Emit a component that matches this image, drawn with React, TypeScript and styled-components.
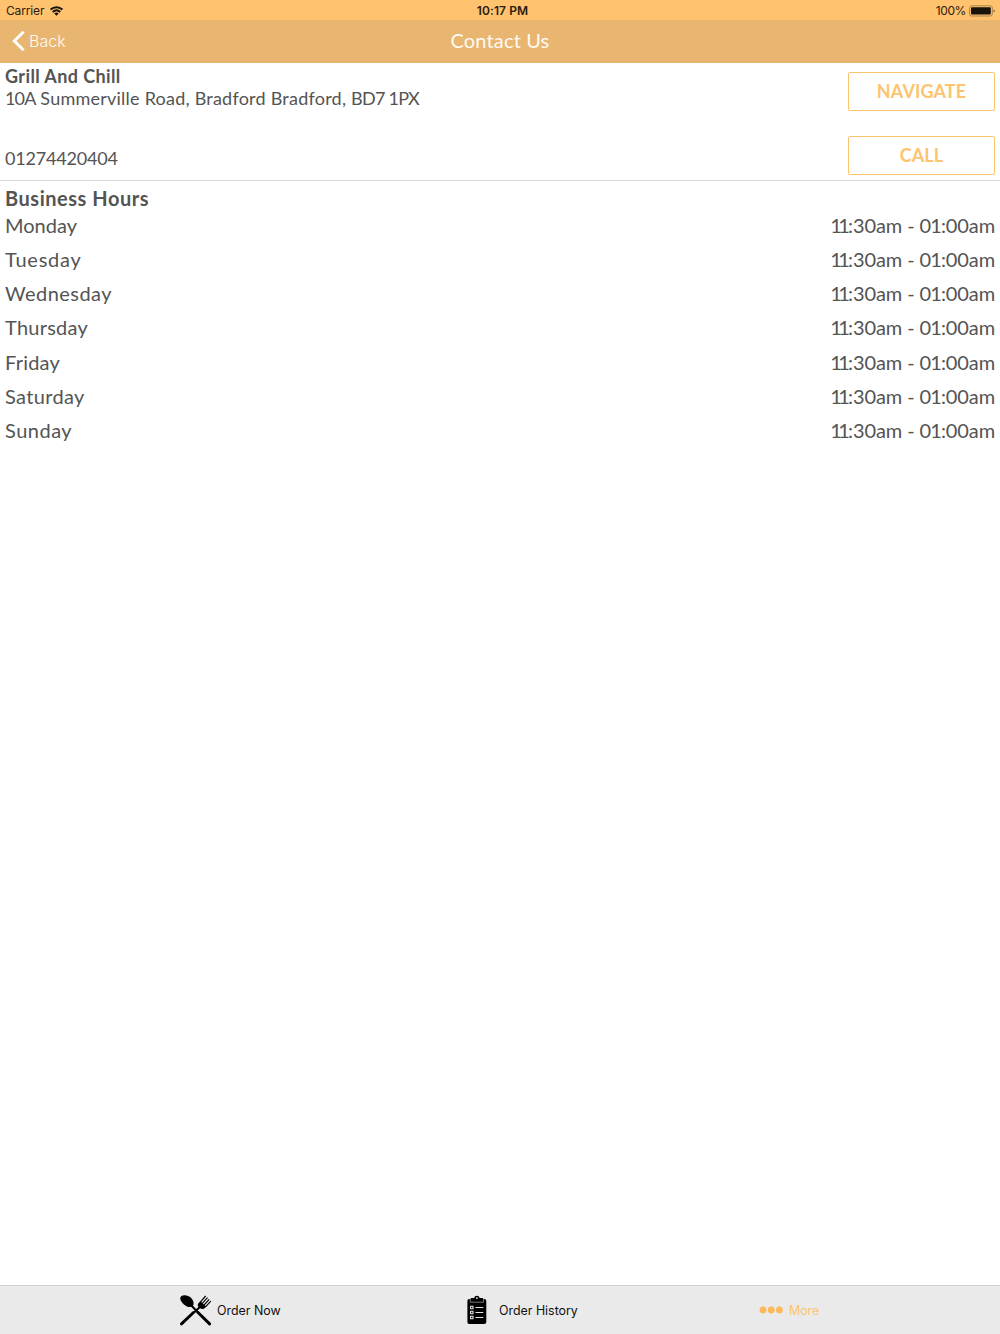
import React from "react";
import styled, { createGlobalStyle } from "styled-components";

const accent = "#fcc46f";

const GlobalStyle = createGlobalStyle`
  * { box-sizing: border-box; }
  body { margin: 0; background: #fff; }
`;

const Screen = styled.div`
  display: flex;
  flex-direction: column;
  width: 100%;
  height: 1334px;
  overflow: hidden;
  background: #fff;
  color: #545454;
  font-family: Lato, "Open Sans", sans-serif;
`;

const StatusBar = styled.header`
  display: grid;
  grid-template-columns: 1fr auto 1fr;
  align-items: center;
  height: 20px;
  padding: 1px 4px 0 6px;
  background: #ffc26f;
  color: #2b2010;
  font: 400 12px/20px Inter, sans-serif;
`;

const StatusGroup = styled.div<{ $end?: boolean }>`
  display: flex;
  align-items: center;
  justify-content: ${(p) => (p.$end ? "flex-end" : "flex-start")};
  gap: ${(p) => (p.$end ? "3px" : "6px")};
  letter-spacing: ${(p) => (p.$end ? "-0.4px" : "-0.15px")};
`;

const Clock = styled.span`
  padding-left: 3px;
  font-weight: 600;
  letter-spacing: 0.1px;
`;

const NavBar = styled.nav`
  display: grid;
  grid-template-columns: 1fr auto 1fr;
  align-items: center;
  height: 43px;
  padding: 0 12px 1px;
  background: #e8b670;
  color: #fffaf2;
`;

const BackButton = styled.button`
  display: flex;
  align-items: center;
  gap: 4px;
  padding: 0;
  border: 0;
  background: none;
  color: inherit;
  font: 300 16px/20px Inter, sans-serif;
`;

const Title = styled.h1`
  margin: 0;
  padding-bottom: 2px;
  font-size: 20px;
  font-weight: 400;
  line-height: 24px;
  letter-spacing: 0.15px;
`;

const Contact = styled.section`
  display: flex;
  justify-content: space-between;
  height: 118px;
  padding: 0 5px;
  border-bottom: 1px solid #d6d6d6;
`;

const Details = styled.div`
  display: flex;
  flex-direction: column;
  padding-top: 2px;
`;

const Line = styled.p<{ $space: number; $bold?: boolean; $gap?: number }>`
  margin: ${(p) => p.$gap ?? 0}px 0 0;
  font-size: 18px;
  font-weight: ${(p) => (p.$bold ? 700 : 400)};
  line-height: 22px;
  letter-spacing: ${(p) => p.$space}px;
`;

const Tracked = styled.span<{ $space: number }>`
  letter-spacing: ${(p) => p.$space}px;
`;

const Actions = styled.div`
  display: flex;
  flex-direction: column;
  gap: 25px;
  padding-top: 9px;
`;

const ActionButton = styled.button<{ $space: number }>`
  width: 147px;
  height: 39px;
  padding: 0 0 1px;
  border: 1px solid ${accent};
  border-radius: 2px;
  background: #fff;
  color: ${accent};
  font: 700 18px/22px Lato, sans-serif;
  letter-spacing: ${(p) => p.$space}px;
`;

const Hours = styled.section`
  flex: 1;
  padding: 6px 5px 0;
`;

const HoursTitle = styled.h2`
  margin: 0;
  font-size: 20px;
  font-weight: 700;
  line-height: 23px;
  letter-spacing: 0.53px;
`;

const HoursRow = styled.div`
  display: flex;
  align-items: center;
  justify-content: space-between;
  height: 34.15px;
  padding-bottom: 4px;
  font-size: 20px;
  line-height: 24px;
`;

const TabBar = styled.footer`
  display: flex;
  align-items: center;
  height: 49px;
  padding-left: 179px;
  border-top: 1px solid #cfcfcf;
  background: #eaeaea;
`;

const Tab = styled.button<{ $width: number; $gap: number; $active?: boolean }>`
  display: flex;
  align-items: center;
  gap: ${(p) => p.$gap}px;
  width: ${(p) => p.$width}px;
  padding: 0;
  border: 0;
  background: none;
  color: ${(p) => (p.$active ? accent : "#111")};
  font: 400 12.4px/16px Inter, sans-serif;
`;

const TabLabel = styled.span`
  padding-top: 2px;
`;

const days: [string, number][] = [
  ["Monday", 0],
  ["Tuesday", 0.75],
  ["Wednesday", 0.45],
  ["Thursday", 0.25],
  ["Friday", 0.2],
  ["Saturday", 0.35],
  ["Sunday", 0.5],
];

const OpeningTime = () => (
  <Tracked $space={-0.1}>
    <Tracked $space={-3.6}>1</Tracked>
    <Tracked $space={-1.8}>1</Tracked>
    {":30am - "}
    <Tracked $space={-0.9}>01</Tracked>
    {":00am"}
  </Tracked>
);

const Wifi = () => (
  <svg width="13" height="10" viewBox="0 0 13 10" fill="none" stroke="#17120a" strokeWidth="1.9">
    <path d="M.6 3.6C4 .4 9 .4 12.4 3.6" />
    <path d="M2.7 6C5 3.8 8 3.8 10.3 6" />
    <path d="M4.3 7.5C5.6 6.3 7.4 6.3 8.7 7.5L6.5 9.7Z" fill="#17120a" stroke="none" />
  </svg>
);

const Battery = () => (
  <svg width="27" height="12" viewBox="0 0 27 12">
    <rect x=".5" y=".8" width="22.8" height="10.2" rx="2" fill="none" stroke="#a5844f" />
    <rect x="2" y="2.3" width="19.8" height="7.2" rx=".7" fill="#17120a" />
    <path d="M24.6 4.2C26 4.7 26 7.1 24.6 7.6Z" fill="#5b482b" />
  </svg>
);

const BackIcon = () => (
  <svg width="13" height="22" viewBox="0 0 13 22" fill="none" stroke="#fff" strokeWidth="3">
    <path d="M11.7 1.7L2.3 11L11.7 20.3" />
  </svg>
);

const Cutlery = () => (
  <svg width="33" height="32" viewBox="0 0 33 32" fill="none" stroke="#000">
    <path d="M11 10L18 17.5M22.5 11.5L15 18.5" strokeWidth="2" />
    <path d="M18.5 18L30.6 29.9M14.5 18.5L2.5 29.9" strokeWidth="2.9" strokeLinecap="round" />
    <path d="M2.2 2.2C5 .4 10.6 1.6 13 4.9C15 7.6 15.2 10.7 13.7 12.1C12 13.7 7.8 13.1 4.9 10.4C1.6 7.4 .2 3.8 2.2 2.2Z" fill="#000" stroke="none" />
    <path d="M19.4 9.3L21.3 7.2L27.2 12.4L25.2 14.4C23.4 15.4 21.6 14.9 20.1 13.5C18.7 12.2 18.3 10.7 19.4 9.3Z" fill="#000" stroke="none" />
    <path d="M20.9 8.6L26.6 2M22.8 9.9L28.5 3.6M24.6 11.5L30.2 5.4M26.3 13.1L31.8 7.2" strokeWidth="1.15" />
  </svg>
);

const Clipboard = () => (
  <svg width="20" height="30" viewBox="0 0 20 30">
    <path d="M2.2 4H17.3Q19.3 4 19.3 6V27Q19.3 29 17.3 29H2.2Q.4 29 .4 27V6Q.4 4 2.2 4Z" />
    <path d="M3.5 6.8V4Q3.5 3 4.5 3H7.2Q7.4 .8 9.9 .8T12.6 3H15.3Q16.3 3 16.3 4V6.8Z" />
    <circle cx="9.9" cy="3.1" r=".9" fill="#eaeaea" />
    <path d="M3.2 4V7.2H16.6V4" fill="none" stroke="#aaa" strokeWidth=".7" />
    <g fill="none" stroke="#e2e2e2" strokeWidth="1.1">
      <path d="M8.5 12.5H16.3M8.5 17.5H16.3M8.5 22.5H16.3" />
      <path d="M3.6 11.3H6V13.7H3.6ZM3.6 16.3H6V18.7H3.6ZM3.6 21.3H6V23.7H3.6Z" />
    </g>
  </svg>
);

const Dots = () => (
  <svg width="25" height="8" viewBox="0 0 25 8" fill="#fdb95a">
    <circle cx="4" cy="4" r="3.4" />
    <circle cx="12.2" cy="4" r="3.4" />
    <circle cx="20.4" cy="4" r="3.4" />
  </svg>
);

export default function App() {
  return (
    <Screen>
      <GlobalStyle />
      <StatusBar>
        <StatusGroup>Carrier <Wifi /></StatusGroup>
        <Clock>10:17 PM</Clock>
        <StatusGroup $end>100% <Battery /></StatusGroup>
      </StatusBar>
      <NavBar>
        <BackButton><BackIcon />Back</BackButton>
        <Title>Contact Us</Title>
      </NavBar>
      <Contact>
        <Details>
          <Line $bold $space={0.4}>Grill And Chill</Line>
          <Line $space={0.23}>
            <Tracked $space={-0.85}>10A</Tracked>
            {" Summerville Road, Bradford Bradford, "}
            <Tracked $space={-0.75}>BD7 1PX</Tracked>
          </Line>
          <Line $space={-0.18} $gap={38}>01274420404</Line>
        </Details>
        <Actions>
          <ActionButton $space={0.1}>NAVIGATE</ActionButton>
          <ActionButton $space={0.1}>CALL</ActionButton>
        </Actions>
      </Contact>
      <Hours>
        <HoursTitle>Business Hours</HoursTitle>
        {days.map(([day, space]) => (
          <HoursRow key={day}>
            <Tracked $space={space}>{day}</Tracked>
            <OpeningTime />
          </HoursRow>
        ))}
      </Hours>
      <TabBar>
        <Tab $width={288} $gap={5}><Cutlery /><TabLabel>Order Now</TabLabel></Tab>
        <Tab $width={292} $gap={12}><Clipboard /><TabLabel>Order History</TabLabel></Tab>
        <Tab $width={70} $gap={5} $active><Dots /><TabLabel>More</TabLabel></Tab>
      </TabBar>
    </Screen>
  );
}
